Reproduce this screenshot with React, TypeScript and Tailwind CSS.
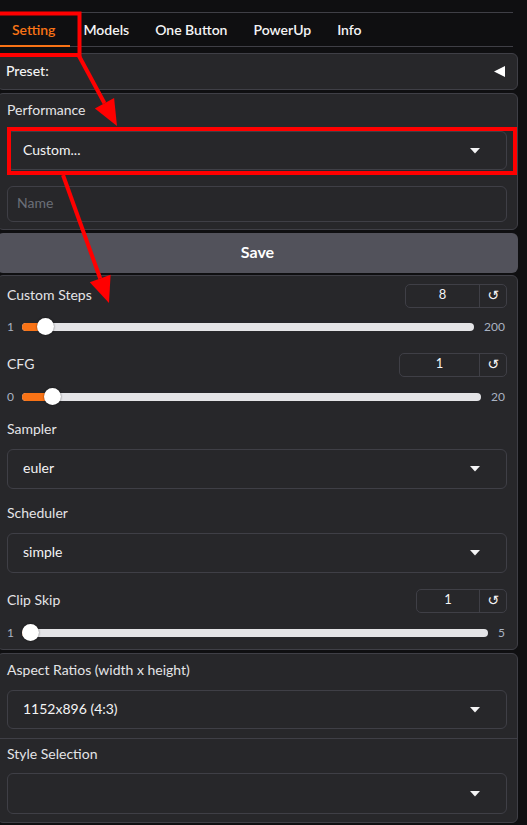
import React from "react";

const Caret = () => (
  <svg width="10" height="6" viewBox="0 0 10 6" className="shrink-0">
    <polygon points="0,0 10,0 5,5.5" fill="#f4f4f5" />
  </svg>
);

function Dropdown({ value, h = "h-[39px]" }: { value?: string; h?: string }) {
  return (
    <div className={`${h} w-full rounded-[6px] border border-[#3f3f46] bg-[#27272a] flex items-center justify-between pl-[15px] pr-[26px]`}>
      <span className="text-[14px] text-[#f4f4f5] pb-[3px]">{value ?? ""}</span>
      <Caret />
    </div>
  );
}

function NumBox({ value, w }: { value: string; w: number }) {
  const widths: Record<number, string> = { 74: "w-[74px]", 80: "w-[80px]", 63: "w-[63px]" };
  return (
    <div className="h-[24px] flex rounded-[5px] border border-[#3f3f46]">
      <div className={`${widths[w]} flex items-center justify-center text-[13px] text-[#f4f4f5] border-r border-[#3f3f46] pb-[2px]`}>{value}</div>
      <div className="w-[26px] flex items-center justify-center text-[14px] text-[#f4f4f5] font-['DejaVu_Sans'] pb-[2px]">↺</div>
    </div>
  );
}

function Slider({ min, max, value }: { min: number; max: number; value: number }) {
  const ratio = (value - min) / (max - min);
  return (
    <div className="h-[17px] flex items-center gap-[10px] pr-[2px]">
      <span className="text-[12px] text-[#aab3c2] w-[5px] leading-none">{min}</span>
      <div className="relative flex-1 h-[8px] rounded-full bg-[#e4e4e7]">
        <div
          className="absolute left-0 top-0 h-[8px] rounded-l-full bg-[#f97316]"
          style={{ width: `calc(8px + ${ratio} * (100% - 16px))` }}
        />
        <div
          className="absolute top-[-4.5px] w-[17px] h-[17px] rounded-full bg-white shadow-[0_0_2px_rgba(0,0,0,0.6)]"
          style={{ left: `calc(${ratio} * (100% - 16px) - 0.5px)` }}
        />
      </div>
      <span className="text-[12px] text-[#aab3c2] leading-none">{max}</span>
    </div>
  );
}

function Label({ children }: { children: React.ReactNode }) {
  return <div className="h-[20px] flex items-center pb-[4px] text-[14px] text-[#e4e4e7]">{children}</div>;
}

export default function App() {
  const tabs = ["Setting", "Models", "One Button", "PowerUp", "Info"];
  return (
    <div className="relative w-[527px] h-[825px] overflow-hidden bg-[#0f0f11] font-['Lato',sans-serif]">
      <div className="pt-[12px]">
        <div className="w-[513px] h-[35px] border-t border-b border-[#3f3f46] flex items-stretch">
          {tabs.map((t, i) => (
            <div
              key={t}
              className={
                i === 0
                  ? "relative flex items-center pl-[12px] pr-[15px] text-[14px] font-semibold text-[#f97316]"
                  : "flex items-center px-[13px] text-[14px] font-semibold text-[#f4f4f5]"
              }
            >
              {t}
              {i === 0 && <div className="absolute left-0 right-0 bottom-[-1px] h-[2px] bg-[#f97316]" />}
            </div>
          ))}
        </div>
      </div>

      <div className="ml-[-3px] w-[521px] mt-[6px] flex flex-col">
        {/* Preset */}
        <div className="h-[37px] rounded-[6px] border border-[#3f3f46] bg-[#27272a] flex items-center justify-between pl-[8px] pr-[12px]">
          <span className="text-[14px] font-medium text-[#f4f4f5] pb-[2px]">Preset:</span>
          <svg width="11" height="11" viewBox="0 0 11 11">
            <polygon points="11,0 11,11 0,5.5" fill="#ffffff" />
          </svg>
        </div>

        {/* Performance */}
        <div className="mt-[3px] rounded-[6px] border border-[#3f3f46] bg-[#27272a] pl-[9px] pr-[10px] pt-[7px] pb-[7px]">
          <Label>Performance</Label>
          <div className="mt-[10px]">
            <Dropdown value="Custom..." />
          </div>
          <div className="mt-[16px] h-[36px] rounded-[6px] border border-[#3f3f46] flex items-center pl-[9px] pb-[3px] text-[14px] text-[#6b6f78]">
            Name
          </div>
        </div>

        {/* Save */}
        <div className="mt-[3px] h-[40px] rounded-[6px] bg-[#52525b] flex items-center justify-center pb-[2px] text-[16px] font-bold text-white">
          Save
        </div>

        {/* Settings block */}
        <div className="mt-[2px] rounded-[6px] border border-[#3f3f46] bg-[#27272a] pl-[9px] pr-[10px] pt-[8px] pb-[8px]">
          <div className="flex items-center justify-between">
            <Label>Custom Steps</Label>
            <NumBox value="8" w={74} />
          </div>
          <div className="mt-[10px]">
            <Slider min={1} max={200} value={8} />
          </div>
          <div className="mt-[18px] flex items-center justify-between">
            <Label>CFG</Label>
            <NumBox value="1" w={80} />
          </div>
          <div className="mt-[11px]">
            <Slider min={0} max={20} value={1} />
          </div>
          <div className="mt-[15px]">
            <Label>Sampler</Label>
          </div>
          <div className="mt-[9px]">
            <Dropdown value="euler" h="h-[40px]" />
          </div>
          <div className="mt-[15px]">
            <Label>Scheduler</Label>
          </div>
          <div className="mt-[9px]">
            <Dropdown value="simple" h="h-[40px]" />
          </div>
          <div className="mt-[16px] flex items-center justify-between">
            <Label>Clip Skip</Label>
            <NumBox value="1" w={63} />
          </div>
          <div className="mt-[11px]">
            <Slider min={1} max={5} value={1} />
          </div>
        </div>

        {/* Aspect + Style */}
        <div className="mt-[3px] rounded-[6px] border border-[#3f3f46] bg-[#27272a]">
          <div className="pl-[9px] pr-[10px] pt-[7px] pb-[9px] border-b border-[#3f3f46]">
            <Label>Aspect Ratios (width x height)</Label>
            <div className="mt-[9px]">
              <Dropdown value="1152x896 (4:3)" />
            </div>
          </div>
          <div className="pl-[9px] pr-[10px] pt-[6px] pb-[8px]">
            <Label>Style Selection</Label>
            <div className="mt-[8px]">
              <Dropdown h="h-[41px]" />
            </div>
          </div>
        </div>
      </div>

      {/* annotation overlay */}
      <svg className="absolute left-0 top-0 pointer-events-none" width="527" height="825" viewBox="0 0 527 825">
        <rect x="-5" y="13.5" width="84.5" height="41.5" fill="none" stroke="#ff0000" strokeWidth="4" />
        <line x1="79" y1="56" x2="104.5" y2="103.2" stroke="#ff0000" strokeWidth="4" />
        <polygon points="117,126 94.9,108.5 114.1,97.9" fill="#ff0000" />
        <rect x="9" y="129" width="506" height="44" fill="none" stroke="#ff0000" strokeWidth="4" />
        <line x1="63" y1="175" x2="100.2" y2="278.5" stroke="#ff0000" strokeWidth="4" />
        <polygon points="109,303 89.8,282.2 110.6,274.8" fill="#ff0000" />
      </svg>
    </div>
  );
}
